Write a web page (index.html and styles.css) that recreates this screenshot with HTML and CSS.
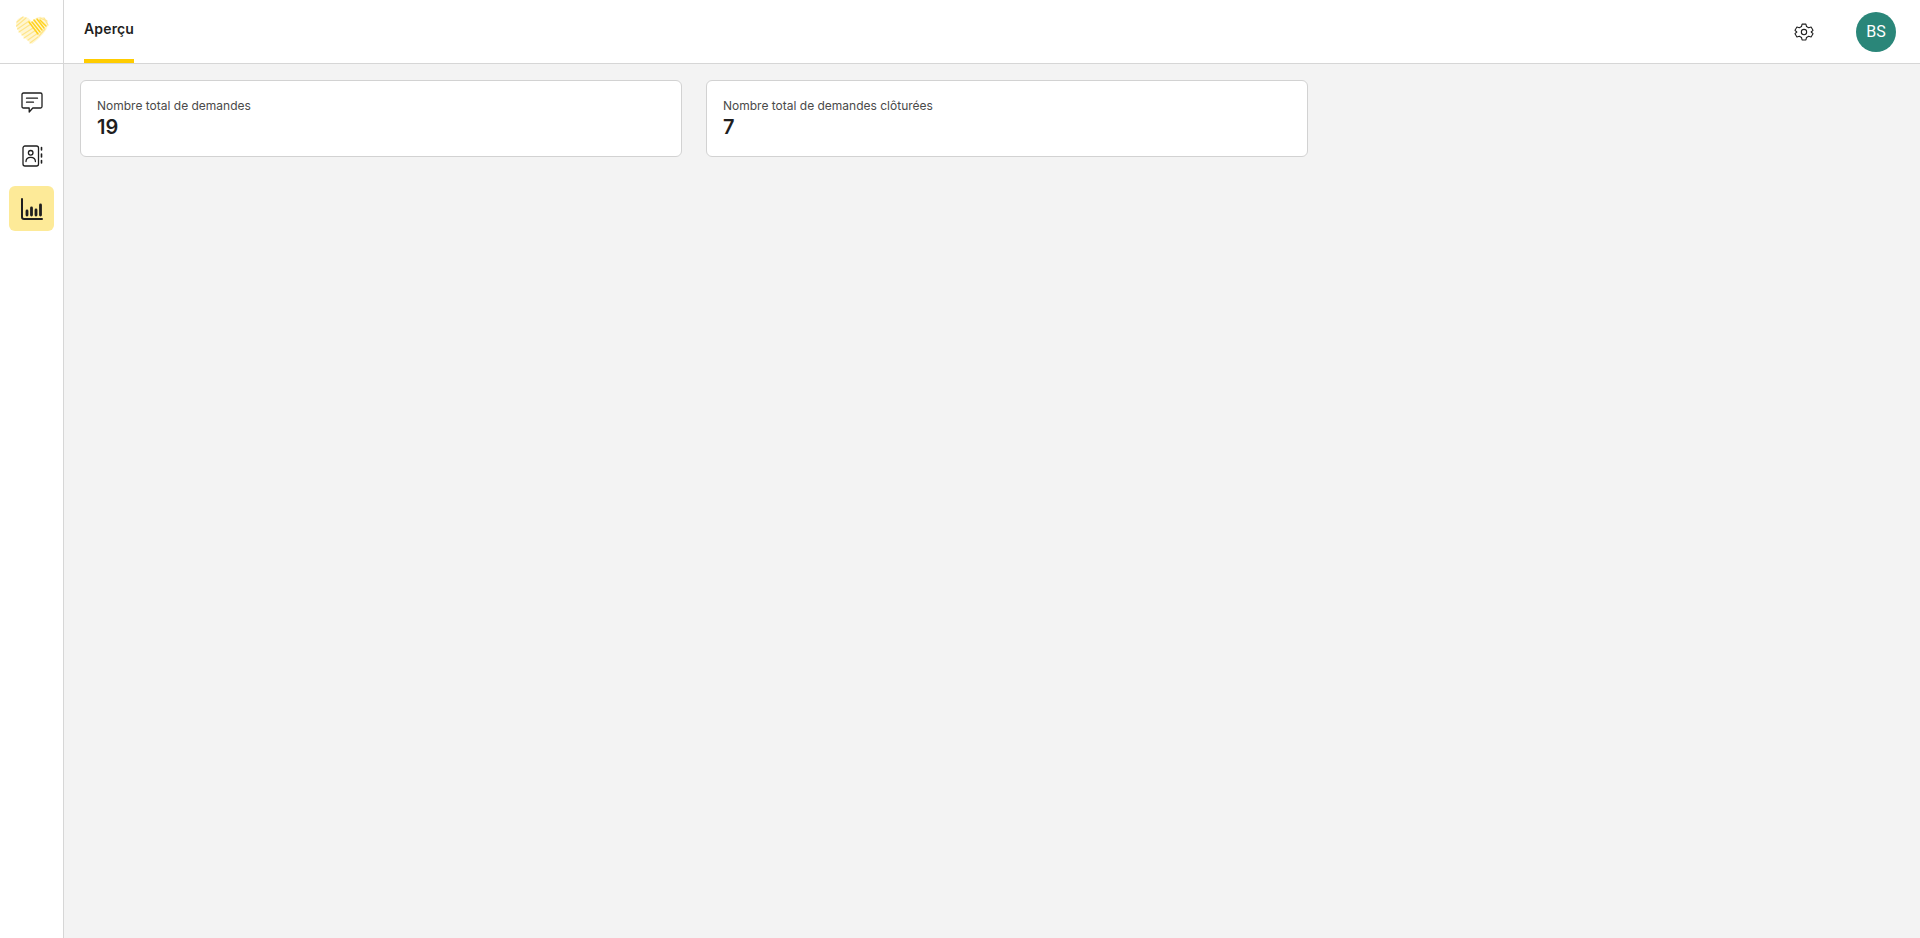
FILE: index.html
```html
<!DOCTYPE html>
<html lang="fr">
<head>
    <meta charset="UTF-8">
    <meta name="viewport" content="width=device-width, initial-scale=1.0">
    <title>Aperçu</title>
    <link rel="stylesheet" href="styles.css">
</head>
<body>
    <aside class="sidebar">
        <div class="logo">
            <svg width="34" height="30" viewBox="0 0 34 30" fill="none" stroke-linecap="round">
                <path d="M1 9C1 4 6 1 10 2C13 2.500 15 4 17 7C19 4 21 2.500 24 2C28 1 33 4 33 9C33 15 25 23 17 29C9 23 1 15 1 9Z" fill="#fff6d2"/>
                <g stroke="#ffe58a" stroke-width="1.200">
                    <path d="M2 7L8 2"/><path d="M1.500 11L11 3"/><path d="M2.500 14L14 6"/><path d="M4 17L16 9"/>
                    <path d="M7 20L18 13"/><path d="M9 23L21 15"/><path d="M13 25L23 18"/><path d="M15 28L23 22"/>
                    <path d="M25 3L32 6"/><path d="M29 3L33 10"/><path d="M24 21L30 14"/>
                </g>
                <g stroke="#ffd21f" stroke-width="1.500">
                    <path d="M14 7L23 19"/><path d="M17 7L25 17"/><path d="M19 5L27 15"/><path d="M22 4L29 13"/><path d="M25 5L31 11"/>
                </g>
            </svg>
        </div>
        <nav class="side-nav">
            <a class="side-link" href="#">
                <svg width="24" height="24" viewBox="0 0 24 24" fill="none" stroke="#1f1f1f" stroke-width="1.300" stroke-linejoin="round" stroke-linecap="round">
                    <path d="M3.500 2H20.500C21.500 2 22 2.500 22 3.500V15.500C22 16.500 21.500 17 20.500 17H12.800L9.200 21V17H3.500C2.500 17 2 16.500 2 15.500V3.500C2 2.500 2.500 2 3.500 2Z"/>
                    <path d="M6.500 7.200H17.500M6.500 11.200H13.500"/>
                </svg>
            </a>
            <a class="side-link" href="#">
                <svg width="24" height="24" viewBox="0 0 24 24" fill="none" stroke="#1f1f1f" stroke-width="1.300" stroke-linecap="round" stroke-linejoin="round">
                    <rect x="3" y="2" width="15.500" height="20" rx="2"/>
                    <circle cx="10.700" cy="8.800" r="2.300"/>
                    <path d="M6 17.500C6 14.500 8 13.300 10.700 13.300C13.400 13.300 15.400 14.500 15.400 17.500"/>
                    <path d="M21.500 3.500V6M21.500 10V13M21.500 16.500V19" stroke-width="1.600"/>
                </svg>
            </a>
            <a class="side-link side-link-active" href="#">
                <svg width="24" height="24" viewBox="0 0 24 24" fill="none" stroke="#1f1f1f" stroke-linecap="round">
                    <path d="M2 2V20C2 21.200 2.800 22 4 22H22" stroke-width="2"/>
                    <path d="M7 14V18M11.500 11V18M16 13V18M20.500 8V18" stroke-width="2.800"/>
                </svg>
            </a>
        </nav>
    </aside>
    <div class="main">
        <header class="topbar">
            <div class="tab">Aperçu</div>
            <div class="topbar-right">
                <svg class="gear" width="20" height="20" viewBox="0 0 24 24" fill="none" stroke="#1f1f1f" stroke-width="1.300" stroke-linejoin="round">
                    <path d="M9.700 2.500H14.300L15 5.400L17.600 6.900L20.500 6L22.800 10L20.600 12L22.800 14L20.500 18L17.600 17.100L15 18.600L14.300 21.500H9.700L9 18.600L6.400 17.100L3.500 18L1.200 14L3.400 12L1.200 10L3.500 6L6.400 6.900L9 5.400Z"/>
                    <circle cx="12" cy="12" r="3.200"/>
                </svg>
                <div class="avatar">BS</div>
            </div>
        </header>
        <main class="content">
            <div class="card">
                <div class="card-label">Nombre total de demandes</div>
                <div class="card-value">19</div>
            </div>
            <div class="card">
                <div class="card-label">Nombre total de demandes clôturées</div>
                <div class="card-value">7</div>
            </div>
        </main>
    </div>
</body>
</html>
```

FILE: styles.css
```css
* {
    box-sizing: border-box;
}
body {
    font-family: 'Inter', sans-serif;
    margin: 0;
    height: 100vh;
    display: flex;
    background-color: #f3f3f3;
    color: #1f1f1f;
    overflow: hidden;
}
.sidebar {
    width: 64px;
    flex-shrink: 0;
    background-color: #fff;
    border-right: 1px solid #d6d6d6;
}
.logo {
    height: 64px;
    border-bottom: 1px solid #d6d6d6;
    display: flex;
    align-items: center;
    justify-content: center;
    padding-bottom: 3px;
}
.side-nav {
    display: flex;
    flex-direction: column;
    align-items: center;
    gap: 8px;
    padding-top: 16px;
}
.side-link {
    width: 45px;
    height: 45px;
    border-radius: 6px;
    display: flex;
    align-items: center;
    justify-content: center;
}
.side-link-active {
    background-color: #fdea98;
}
.main {
    flex: 1;
    min-width: 0;
    display: flex;
    flex-direction: column;
}
.topbar {
    height: 64px;
    background-color: #fff;
    border-bottom: 1px solid #d6d6d6;
    display: flex;
    justify-content: space-between;
    padding: 0 24px 0 20px;
}
.tab {
    height: 63px;
    padding-top: 19px;
    font-size: 14px;
    font-weight: 600;
    letter-spacing: 0.15px;
    line-height: 20px;
    border-bottom: 4px solid #ffcc00;
}
.topbar-right {
    display: flex;
    align-items: center;
    gap: 42px;
}
.avatar {
    width: 40px;
    height: 40px;
    border-radius: 50%;
    background-color: #2a8679;
    color: #fff;
    font-family: 'Roboto', sans-serif;
    font-size: 16px;
    display: flex;
    align-items: center;
    justify-content: center;
}
.content {
    flex: 1;
    min-width: 0;
    overflow: hidden;
    display: grid;
    grid-template-columns: repeat(3, 602px);
    grid-auto-rows: 77px;
    gap: 24px;
    padding: 16px;
}
.card {
    background-color: #fff;
    border: 1px solid #d2d2d2;
    border-radius: 6px;
    padding: 15px 16px;
}
.card-label {
    font-size: 12px;
    line-height: 20px;
    color: #4a4a4a;
}
.card-value {
    font-size: 20px;
    font-weight: 600;
    line-height: 22px;
}
```
